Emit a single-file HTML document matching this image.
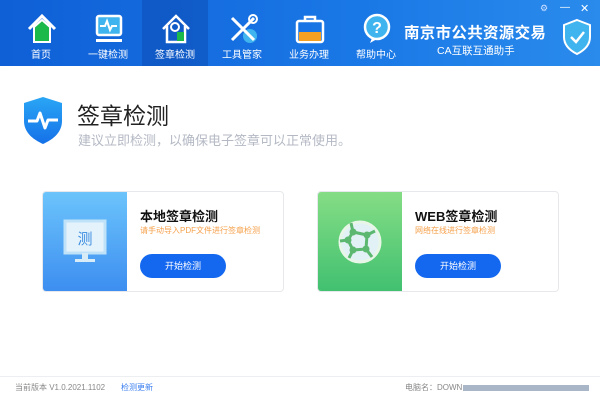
<!DOCTYPE html>
<html><head><meta charset="utf-8"><style>
*{margin:0;padding:0;box-sizing:border-box}
body{width:600px;height:400px;overflow:hidden;background:#fff;font-family:"Liberation Sans","Noto Sans CJK SC",sans-serif;position:relative}
.hd{position:absolute;left:0;top:0;width:600px;height:66px;background:linear-gradient(90deg,#0f5fd6,#1a78e6 60%,#2a8bec)}
.tab{position:absolute;top:0;width:66px;height:66px;text-align:center;color:#fff;font-size:10px}
.tab span{position:absolute;left:0;right:0;top:46px}
.tab svg{position:absolute;left:17px;top:12px}
.act{background:rgba(10,60,160,.35)}
.abs{position:absolute}
.card{position:absolute;top:191px;width:242px;height:101px;border:1px solid #e6e8ec;border-radius:4px;background:#fff;overflow:hidden}
.pan{position:absolute;left:0;top:0;width:84px;height:101px}
.ct{position:absolute;left:97px;top:14px;font-size:13px;font-weight:bold;color:#111}
.cs{position:absolute;left:97px;top:33px;font-size:8px;color:#f5a04a}
.btn{position:absolute;left:97px;top:62px;width:86px;height:24px;border-radius:12px;background:#1468f0;color:#fff;font-size:9px;text-align:center;line-height:24px}
</style></head><body>
<div class="hd">
<div class="tab" style="left:8px"><svg width="34" height="34" viewBox="0 0 34 34"><path d="M4 17 L17 4 L30 17" fill="none" stroke="#fff" stroke-width="3"/><path d="M9 15 L17 8 L25 15 V30 H9Z" fill="#1bb84a" stroke="#fff" stroke-width="2"/></svg><span>首页</span></div>
<div class="tab" style="left:75px"><svg width="34" height="34" viewBox="0 0 34 34"><rect x="5" y="4" width="24" height="19" rx="2" fill="#3fb4ee" stroke="#fff" stroke-width="2.5"/><path d="M8 14h5l2-5 3 9 2-4h5" fill="none" stroke="#fff" stroke-width="2"/><rect x="4" y="27" width="26" height="3" fill="#fff"/></svg><span>一键检测</span></div>
<div class="tab act" style="left:142px"><svg width="34" height="34" viewBox="0 0 34 34"><path d="M4 17 L17 4 L30 17 M8 14 V30 H26 V14" fill="none" stroke="#fff" stroke-width="2.5"/><circle cx="16" cy="15" r="4" fill="none" stroke="#fff" stroke-width="2"/><rect x="18" y="20" width="7" height="9" fill="#1bb84a"/></svg><span>签章检测</span></div>
<div class="tab" style="left:209px"><svg width="34" height="34" viewBox="0 0 34 34"><circle cx="24" cy="24" r="7" fill="#3fb4ee"/><path d="M6 6 L28 28 M28 6 L6 28" stroke="#fff" stroke-width="3"/><circle cx="27" cy="7" r="4" fill="none" stroke="#fff" stroke-width="2"/></svg><span>工具管家</span></div>
<div class="tab" style="left:276px"><svg width="34" height="34" viewBox="0 0 34 34"><rect x="4" y="9" width="26" height="21" rx="2" fill="none" stroke="#fff" stroke-width="2.5"/><rect x="6" y="20" width="22" height="9" fill="#f5a020"/><path d="M12 9V5h10v4" fill="none" stroke="#fff" stroke-width="2.5"/></svg><span>业务办理</span></div>
<div class="tab" style="left:343px"><svg width="34" height="34" viewBox="0 0 34 34"><circle cx="17" cy="15" r="12" fill="#3fb4ee" stroke="#fff" stroke-width="2.5"/><text x="17" y="21" font-size="16" font-weight="bold" fill="#fff" text-anchor="middle" font-family="Liberation Sans">?</text><path d="M12 26 L10 31 L17 27" fill="#fff"/></svg><span>帮助中心</span></div>
<div class="abs" style="left:404px;top:21px;color:#fff;font-size:15.5px;font-weight:bold;letter-spacing:0.3px">南京市公共资源交易</div>
<div class="abs" style="left:437px;top:43px;color:#fff;font-size:10.5px">CA互联互通助手</div>
<svg class="abs" style="left:562px;top:18px" width="30" height="38" viewBox="0 0 30 38"><path d="M15 2 L28 7 V19 C28 28 21 33 15 36 C9 33 2 28 2 19 V7Z" fill="#3fb4ee" stroke="#fff" stroke-width="2"/><path d="M9 19 L14 24 L22 14" fill="none" stroke="#fff" stroke-width="2.5"/></svg>
<div class="abs" style="left:540px;top:3px;color:#cfe0ff;font-size:9px">⚙</div>
<div class="abs" style="left:560px;top:2px;color:#fff;font-size:10px">—</div>
<div class="abs" style="left:580px;top:2px;color:#fff;font-size:11px">✕</div>
</div>
<svg class="abs" style="left:22px;top:95px" width="42" height="50" viewBox="0 0 42 50"><defs><linearGradient id="g" x1="0" y1="0" x2="0" y2="1"><stop offset="0" stop-color="#2aa6f5"/><stop offset="1" stop-color="#1571e8"/></linearGradient></defs><path d="M21 2 L40 8 V26 C40 38 30 45 21 49 C12 45 2 38 2 26 V8Z" fill="url(#g)"/><path d="M6 26 H15 L18 18 L23 33 L26 25 H36" fill="none" stroke="#fff" stroke-width="3" stroke-linejoin="round"/></svg>
<div class="abs" style="left:77px;top:97px;font-size:23px;color:#222">签章检测</div>
<div class="abs" style="left:78px;top:130px;font-size:13px;color:#b4b9c4">建议立即检测，以确保电子签章可以正常使用。</div>
<div class="card" style="left:42px"><div class="pan" style="background:linear-gradient(#6cc4fb,#3c8df0)"><svg style="position:absolute;left:20px;top:27px" width="46" height="46" viewBox="0 0 46 46"><rect x="2" y="2" width="40" height="32" fill="#e4f2fb" stroke="#bfe2f8" stroke-width="3"/><text x="22" y="25" font-size="15" fill="#3b8de0" text-anchor="middle" font-family="Noto Sans CJK SC">测</text><rect x="19" y="34" width="6" height="7" fill="#d8ecf8"/><rect x="12" y="40" width="20" height="3" fill="#d8ecf8"/></svg></div>
<div class="ct">本地签章检测</div><div class="cs">请手动导入PDF文件进行签章检测</div><div class="btn">开始检测</div></div>
<div class="card" style="left:317px"><div class="pan" style="background:linear-gradient(#85dd85,#40c070)"><svg style="position:absolute;left:19px;top:27px" width="46" height="46" viewBox="0 0 46 46"><circle cx="23" cy="23" r="20" fill="#e2f1f5" stroke="#e8f6e8" stroke-width="3"/><g fill="none" stroke="#5cb870" stroke-width="3"><path d="M16 13 L30 16 L29 30 L16 31 L11 21Z"/><path d="M16 13 L14 4 M30 16 L38 12 M29 30 L35 38 M16 31 L12 39 M11 21 L3 22"/></g><g fill="#5cb870"><circle cx="16" cy="13" r="3.5"/><circle cx="30" cy="16" r="3.5"/><circle cx="29" cy="30" r="3.5"/><circle cx="16" cy="31" r="3.5"/><circle cx="11" cy="21" r="3.5"/></g></svg></div>
<div class="ct">WEB签章检测</div><div class="cs">网络在线进行签章检测</div><div class="btn">开始检测</div></div>
<div class="abs" style="left:0;top:376px;width:600px;height:1px;background:#eceef1"></div>
<div class="abs" style="left:15px;top:382px;font-size:8px;color:#888">当前版本 V1.0.2021.1102</div>
<div class="abs" style="left:121px;top:382px;font-size:8px;color:#3b7ff0">检测更新</div>
<div class="abs" style="left:405px;top:382px;font-size:8px;color:#888">电脑名：DOWN</div>
<div class="abs" style="left:463px;top:385px;width:126px;height:6px;background:#a9b6c8"></div>
</body></html>
